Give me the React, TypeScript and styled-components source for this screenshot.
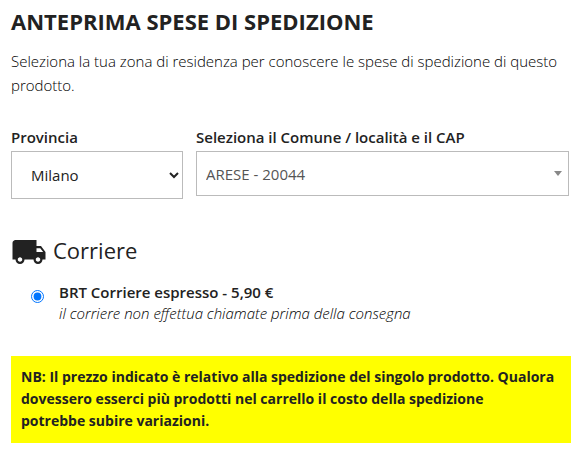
import React from 'react';
import styled, { createGlobalStyle } from 'styled-components';

const GlobalStyle = createGlobalStyle`
  *, *::before, *::after { box-sizing: border-box; }
  body {
    margin: 0;
    background: #fff;
    color: #222;
    font-family: "Open Sans", sans-serif;
    font-size: 15px;
    font-weight: 400;
    line-height: 24px;
  }
`;

const Page = styled.main`
  padding: 7px 9px 12px 11px;
`;

const Title = styled.h1`
  margin: 0;
  font-size: 22px;
  line-height: 28px;
  font-weight: 700;
  text-transform: uppercase;
`;

const Intro = styled.p`
  margin: 14px 0 0;
  color: #000;
  font-weight: 300;
`;

const Fields = styled.div`
  display: grid;
  grid-template-columns: 172px 1fr;
  gap: 13px;
  margin: 28px 2px 0 0;
`;

const Field = styled.div`
  display: flex;
  flex-direction: column;
`;

const Label = styled.label`
  padding-bottom: 2px;
  font-weight: 600;
`;

const SelectFrame = styled.div`
  display: grid;
  align-items: center;
`;

const Select = styled.select<{ $plain?: boolean }>`
  grid-area: 1 / 1;
  width: 100%;
  height: ${(p) => (p.$plain ? 45 : 48)}px;
  margin: 0;
  padding: ${(p) => (p.$plain ? '0 28px 0 9px' : '0 0 0 15px')};
  border: 1px solid #bbb;
  border-radius: 0;
  background: #fff;
  color: ${(p) => (p.$plain ? '#555' : '#222')};
  font: inherit;
  appearance: ${(p) => (p.$plain ? 'none' : 'auto')};
`;

const Caret = styled.span`
  grid-area: 1 / 1;
  justify-self: end;
  margin-right: 7px;
  border: 4px solid transparent;
  border-top: 5px solid #888;
  border-bottom: 0;
  pointer-events: none;
`;

const Carrier = styled.h2`
  display: flex;
  align-items: center;
  gap: 6px;
  margin: 35px 0 0;
  font-size: 22px;
  line-height: 32px;
  font-weight: 400;
`;

const Option = styled.label`
  display: grid;
  grid-template-columns: 13px 1fr;
  column-gap: 15px;
  margin: 16px 0 0 20px;
  line-height: 21px;
`;

const Radio = styled.input`
  width: 13px;
  height: 13px;
  margin: 8px 0 0;
`;

const Service = styled.strong`
  display: block;
  font-weight: 600;
`;

const ServiceNote = styled.em`
  color: #000;
  font-weight: 300;
`;

const Notice = styled.p`
  margin: 32px 0 0;
  padding: 10px 10px 11px;
  background: #ff0;
  font-size: 14px;
  line-height: 22px;
  font-weight: 700;
`;

function TruckIcon() {
  return (
    <svg width="36" height="27" viewBox="0 2 24 18" fill="#222" aria-hidden="true">
      <path d="M20 8h-3V4H3c-1.1 0-2 .9-2 2v11h2c0 1.66 1.34 3 3 3s3-1.34 3-3h6c0 1.66 1.34 3 3 3s3-1.34 3-3h2v-5l-3-4zM6 18.5c-.83 0-1.5-.67-1.5-1.5s.67-1.5 1.5-1.5 1.5.67 1.5 1.5-.67 1.5-1.5 1.5zm13.5-9l1.96 2.5H17V9.5h2.5zm-1.5 9c-.83 0-1.5-.67-1.5-1.5s.67-1.5 1.5-1.5 1.5.67 1.5 1.5-.67 1.5-1.5 1.5z" />
    </svg>
  );
}

export default function App() {
  return (
    <>
      <GlobalStyle />
      <Page>
        <Title>Anteprima spese di spedizione</Title>
        <Intro>Seleziona la tua zona di residenza per conoscere le spese di spedizione di questo prodotto.</Intro>
        <Fields>
          <Field>
            <Label htmlFor="provincia">Provincia</Label>
            <Select id="provincia"><option>Milano</option></Select>
          </Field>
          <Field>
            <Label htmlFor="comune">Seleziona il Comune / località e il CAP</Label>
            <SelectFrame>
              <Select id="comune" $plain><option>ARESE - 20044</option></Select>
              <Caret />
            </SelectFrame>
          </Field>
        </Fields>
        <Carrier>
          <TruckIcon />
          Corriere
        </Carrier>
        <Option>
          <Radio type="radio" name="corriere" defaultChecked />
          <span>
            <Service>BRT Corriere espresso - 5,90 €</Service>
            <ServiceNote>il corriere non effettua chiamate prima della consegna</ServiceNote>
          </span>
        </Option>
        <Notice>
          NB: Il prezzo indicato è relativo alla spedizione del singolo prodotto. Qualora dovessero esserci più prodotti nel carrello il costo della spedizione<br />
          potrebbe subire variazioni.
        </Notice>
      </Page>
    </>
  );
}
